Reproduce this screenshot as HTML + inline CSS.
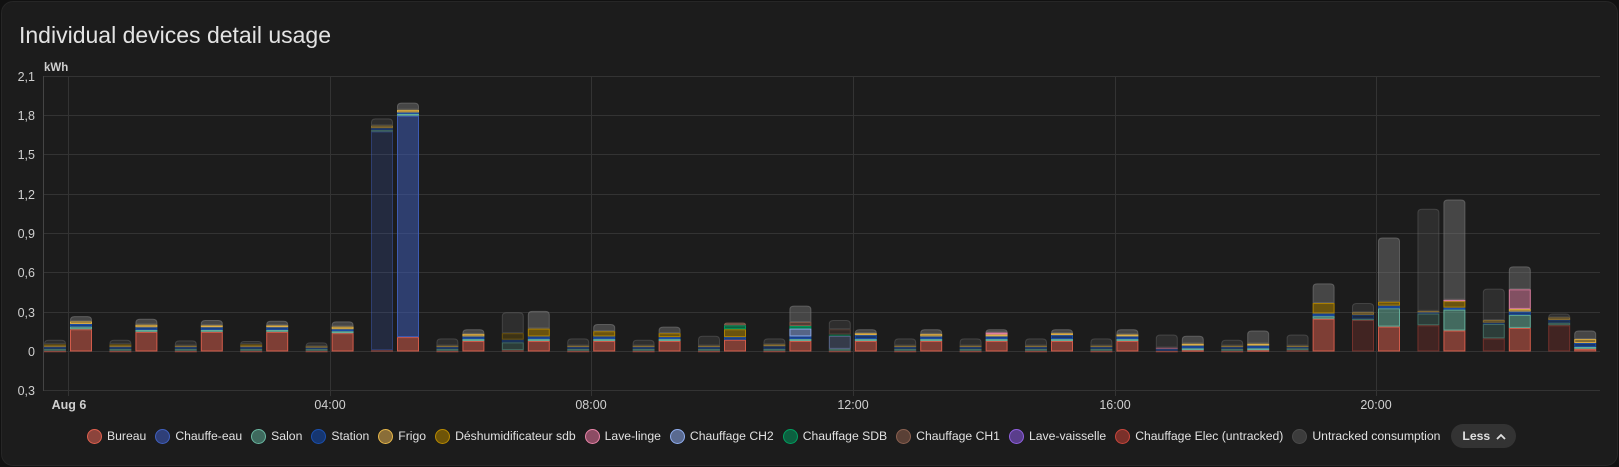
<!DOCTYPE html>
<html><head><meta charset="utf-8"><style>
html,body{margin:0;padding:0;background:#111;width:1619px;height:467px;overflow:hidden;font-family:"Liberation Sans",Roboto,sans-serif}
.card{position:absolute;left:1px;top:1px;width:1615px;height:463px;background:#1c1c1c;border-radius:12px;border:1px solid #262626}
.title{position:absolute;left:17px;top:20px;font-size:23px;color:#e3e3e3}
svg{position:absolute;left:0;top:0}
.legend{position:absolute;left:87px;top:424px;display:flex;align-items:center;font-size:12.2px;color:#e0e0e0;white-space:nowrap}
.li{display:flex;align-items:center;margin-right:9px}
.dot{width:15px;height:15px;border-radius:50%;border:1.5px solid;margin-right:5px;box-sizing:border-box}
.less{background:#333;border-radius:13px;padding:5px 10px 5px 11px;font-weight:bold;font-size:12.2px;color:#e0e0e0;display:flex;align-items:center;margin-left:2px}
</style></head><body>
<div class="card">
<div class="title">Individual devices detail usage</div>
</div>
<svg id="s" width="1619" height="467" font-family="Liberation Sans, sans-serif">
<g stroke="#333" stroke-width="1">
<line x1="43" x2="1600" y1="76.5" y2="76.5"/><line x1="43" x2="1600" y1="115.5" y2="115.5"/><line x1="43" x2="1600" y1="154.5" y2="154.5"/><line x1="43" x2="1600" y1="194.5" y2="194.5"/><line x1="43" x2="1600" y1="233.5" y2="233.5"/><line x1="43" x2="1600" y1="272.5" y2="272.5"/><line x1="43" x2="1600" y1="312.5" y2="312.5"/><line x1="43" x2="1600" y1="351.5" y2="351.5"/><line x1="43" x2="1600" y1="390.5" y2="390.5"/>
<line x1="43.5" x2="43.5" y1="76" y2="391" stroke="#444"/>
<line x1="68.5" x2="68.5" y1="76" y2="396"/><line x1="330.5" x2="330.5" y1="76" y2="396"/><line x1="591.5" x2="591.5" y1="76" y2="396"/><line x1="853.5" x2="853.5" y1="76" y2="396"/><line x1="1115.5" x2="1115.5" y1="76" y2="396"/><line x1="1376.5" x2="1376.5" y1="76" y2="396"/>
</g>
<g fill="#cfcfcf" font-size="12.5" text-anchor="end">
<text x="35" y="81">2,1</text><text x="35" y="120">1,8</text><text x="35" y="159">1,5</text><text x="35" y="199">1,2</text><text x="35" y="238">0,9</text><text x="35" y="277">0,6</text><text x="35" y="317">0,3</text><text x="35" y="356">0</text><text x="35" y="395">0,3</text>
</g>
<text x="44" y="71" fill="#cfcfcf" font-size="11.5" font-weight="bold">kWh</text>
<g fill="#d0d0d0" font-size="12.5" text-anchor="middle">
<text x="69" y="409" font-weight="bold">Aug 6</text><text x="330" y="409">04:00</text><text x="591" y="409">08:00</text><text x="853" y="409">12:00</text><text x="1115" y="409">16:00</text><text x="1376" y="409">20:00</text>
</g>
<g id="bars"></g>
</svg>
<div class="legend">
<div class="li"><div class="dot" style="background:#8c443c;border-color:#e0604e"></div>Bureau</div>
<div class="li"><div class="dot" style="background:#2f3f78;border-color:#4060c0"></div>Chauffe-eau</div>
<div class="li"><div class="dot" style="background:#3f6a5e;border-color:#6ab8a2"></div>Salon</div>
<div class="li"><div class="dot" style="background:#163670;border-color:#1a50b0"></div>Station</div>
<div class="li"><div class="dot" style="background:#8a6e38;border-color:#e8b84a"></div>Frigo</div>
<div class="li"><div class="dot" style="background:#6e5408;border-color:#b88a00"></div>Déshumidificateur sdb</div>
<div class="li"><div class="dot" style="background:#8c4c64;border-color:#e884a8"></div>Lave-linge</div>
<div class="li"><div class="dot" style="background:#5a6a90;border-color:#90aef0"></div>Chauffage CH2</div>
<div class="li"><div class="dot" style="background:#0c6040;border-color:#00a060"></div>Chauffage SDB</div>
<div class="li"><div class="dot" style="background:#5a4036;border-color:#8a6050"></div>Chauffage CH1</div>
<div class="li"><div class="dot" style="background:#5a3e8c;border-color:#9060e0"></div>Lave-vaisselle</div>
<div class="li"><div class="dot" style="background:#7a302a;border-color:#c8463c"></div>Chauffage Elec (untracked)</div>
<div class="li"><div class="dot" style="background:#3c3c3c;border-color:#4a4a4a"></div>Untracked consumption</div>
<div class="less">Less<svg style="position:static;margin-left:6px" width="10" height="7" viewBox="0 0 10 7"><path d="M1 6L5 2L9 6" fill="none" stroke="#e0e0e0" stroke-width="1.8"/></svg></div>
</div>
<script>
var C={r:'#e0604e',b:'#4060c0',s:'#6ab8a2',st:'#1a50b0',f:'#e8b84a',d:'#b88a00',l:'#e884a8',c2:'#90aef0',sd:'#00a060',c1:'#8a6050',e:'#c8463c',u:'#7a7a7a'};
var H=[
[[['r',.005],['s',.015],['st',.015],['f',.01],['d',.01],['u',0]],.09,[['r',.17],['s',.02],['st',.02],['f',.02],['u',0]],.27],
[[['r',.005],['s',.015],['st',.015],['f',.01],['d',.01],['u',0]],.09,[['r',.15],['s',.015],['st',.02],['f',.02],['u',0]],.25],
[[['r',.005],['s',.015],['st',.015],['f',.01],['u',0]],.085,[['r',.15],['s',.015],['st',.02],['f',.015],['u',0]],.24],
[[['r',.005],['s',.015],['st',.015],['f',.01],['d',.01],['u',0]],.08,[['r',.15],['s',.015],['st',.02],['f',.015],['u',0]],.235],
[[['r',.005],['s',.015],['st',.01],['f',.01],['u',0]],.07,[['r',.14],['s',.015],['st',.015],['f',.02],['u',0]],.23],
[[['r',.01],['b',1.67],['s',.01],['st',.015],['f',.02],['u',0]],1.78,[['r',.11],['b',1.69],['s',.015],['st',.01],['f',.02],['u',0]],1.9],
[[['r',.005],['s',.015],['st',.015],['f',.01],['u',0]],.1,[['r',.08],['s',.015],['st',.02],['f',.02],['u',0]],.17],
[[['r',.01],['s',.06],['st',.02],['d',.05],['u',0]],.3,[['r',.08],['s',.015],['st',.02],['d',.06],['u',0]],.31],
[[['r',.005],['s',.015],['st',.015],['f',.01],['u',0]],.1,[['r',.08],['s',.015],['st',.02],['d',.04],['u',0]],.21],
[[['r',.005],['s',.015],['st',.015],['f',.01],['u',0]],.09,[['r',.08],['s',.015],['st',.015],['d',.03],['u',0]],.19],
[[['r',.005],['s',.015],['st',.015],['f',.01],['u',0]],.12,[['r',.09],['st',.02],['d',.06],['sd',.03],['c1',.02]],.23],
[[['r',.005],['s',.015],['st',.02],['f',.015],['u',0]],.1,[['r',.08],['s',.015],['st',.02],['c2',.06],['sd',.02],['c1',.03],['u',0]],.35],
[[['r',.005],['s',.015],['c2',.1],['sd',.01],['c1',.04],['u',0]],.24,[['r',.08],['s',.015],['st',.03],['f',.015],['u',0]],.17],
[[['r',.005],['s',.015],['st',.015],['f',.01],['u',0]],.1,[['r',.08],['s',.015],['st',.02],['f',.02],['u',0]],.17],
[[['r',.005],['s',.015],['st',.015],['f',.01],['u',0]],.1,[['r',.08],['s',.015],['st',.02],['f',.015],['l',.015],['u',0]],.17],
[[['r',.005],['s',.015],['st',.015],['f',.01],['u',0]],.1,[['r',.08],['s',.015],['st',.03],['f',.015],['u',0]],.17],
[[['r',.005],['s',.015],['st',.015],['f',.01],['u',0]],.1,[['r',.08],['s',.015],['st',.02],['f',.015],['u',0]],.17],
[[['r',.005],['st',.015],['l',.01],['u',0]],.13,[['r',.01],['s',.015],['st',.02],['f',.015],['u',0]],.12],
[[['r',.005],['s',.015],['st',.015],['f',.01],['u',0]],.09,[['r',.01],['s',.015],['st',.02],['f',.015],['u',0]],.16],
[[['r',.01],['s',.015],['st',.01],['f',.01],['u',0]],.13,[['r',.25],['s',.02],['st',.02],['d',.08],['u',0]],.52],
[[['e',.24],['s',.01],['st',.03],['f',.02],['u',0]],.37,[['r',.19],['s',.14],['st',.02],['d',.03],['u',0]],.87],
[[['e',.2],['s',.09],['st',.01],['f',.01],['u',0]],1.09,[['r',.16],['s',.16],['st',.015],['d',.05],['l',.01],['u',0]],1.16],
[[['e',.1],['s',.11],['st',.01],['f',.02],['u',0]],.48,[['r',.18],['s',.1],['st',.025],['f',.02],['l',.15],['u',0]],.65],
[[['e',.2],['s',.02],['st',.02],['f',.02],['u',0]],.29,[['r',.02],['s',.015],['st',.03],['f',.03],['u',0]],.16]
];
var g=document.getElementById('bars'),out='';
function y(v){return 351.5-v*131;}
function hexa(h,a){var n=parseInt(h.slice(1),16);return 'rgba('+(n>>16)+','+((n>>8)&255)+','+(n&255)+','+a+')';}
function bar(x,parts,tot,dim){
 var acc=0,s='';
 parts.forEach(function(p,i){
  var v=p[1]; if(p[0]=='u') v=Math.max(tot-acc,0);
  if(v<=0)return;
  var y1=y(acc+v),y0=y(acc),hgt=y0-y1,col=C[p[0]];
  var fa=dim?0.22:0.5, sa=dim?0.45:0.9;
  if(p[0]=='u'){fa=dim?0.2:0.45;sa=dim?0.35:0.6;}
  var top=(i==parts.length-1)||(acc+v>=tot-0.001);
  if(top){var r=Math.min(4,hgt);s+='<path d="M'+(x+.5)+' '+(y0-.5)+'V'+(y1+r)+'Q'+(x+.5)+' '+(y1+.5)+' '+(x+r+.5)+' '+(y1+.5)+'H'+(x+21.5-r)+'Q'+(x+21.5)+' '+(y1+.5)+' '+(x+21.5)+' '+(y1+r)+'V'+(y0-.5)+'Z" fill="'+hexa(col,fa)+'" stroke="'+hexa(col,sa)+'"/>';}
  else s+='<rect x="'+(x+.5)+'" y="'+(y1+.5)+'" width="21" height="'+Math.max(hgt-1,0.5)+'" fill="'+hexa(col,fa)+'" stroke="'+hexa(col,sa)+'"/>';
  acc+=v;
 });
 return s;
}
H.forEach(function(h,i){
 out+=bar(44+65.4*i,h[0],h[1],true);
 out+=bar(70+65.4*i,h[2],h[3],false);
});
g.innerHTML=out;
</script>
</body></html>
